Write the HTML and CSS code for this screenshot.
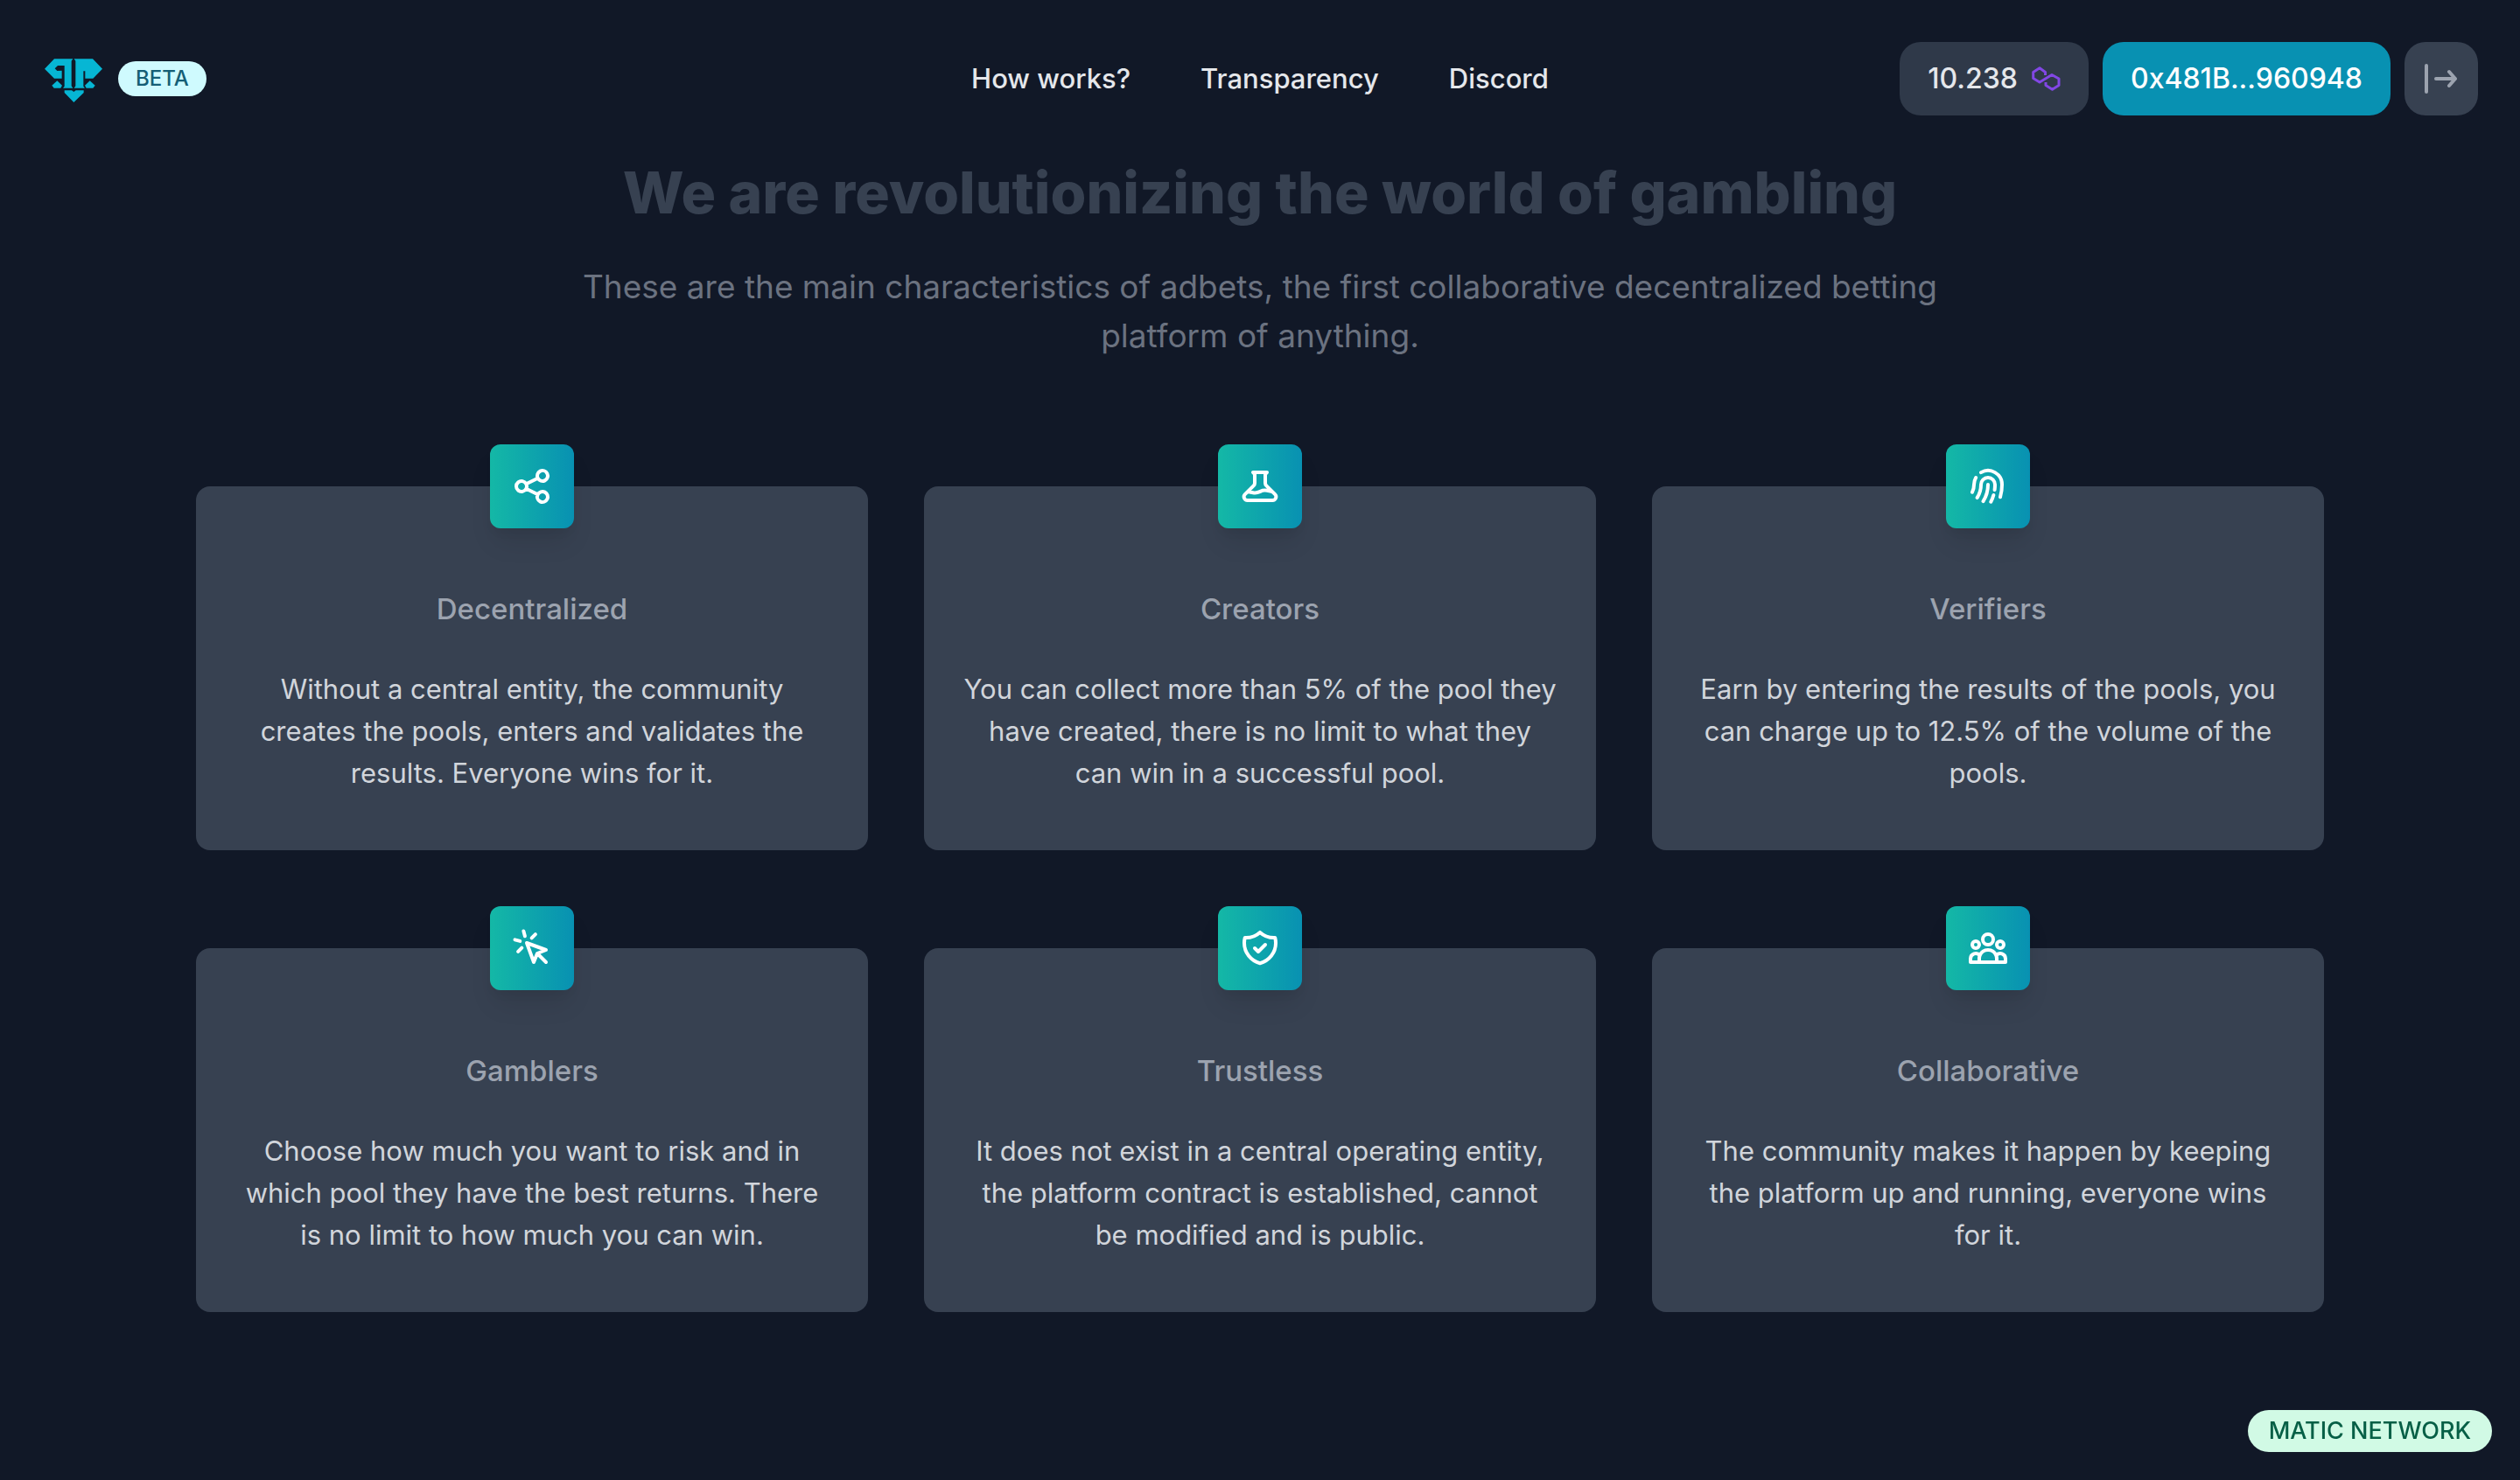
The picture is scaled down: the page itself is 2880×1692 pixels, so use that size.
FILE: index.html
```html
<!DOCTYPE html>
<html lang="en">
<head>
    <meta charset="UTF-8">
    <meta name="viewport" content="width=device-width, initial-scale=1.0">
    <title>adbets</title>
    <link rel="stylesheet" href="styles.css">
</head>
<body>
    <header class="header">
        <div class="brand">
            <a class="home" href="#" aria-label="adbets">
                <svg class="logo" viewBox="63 83 198 150">
                    <path d="M63 118L96 84H160L155 91V177L160 184H126L131 178V107H108L98 117L106 125L122 124V151H96Z"/>
                    <path d="M261 118L228 84H164L169 91V177L164 184H201L196 178V126H219L228 118L218 107H202V151H229Z"/>
                    <path d="M88 175L106 159L123 175L118 184H95Z"/>
                    <path d="M236 175L218 159L201 175L206 184H229Z"/>
                    <path d="M131 192H156L163 197L170 192H197V200L163 233L131 200Z"/>
                </svg>
            </a>
            <span class="beta">BETA</span>
        </div>

        <nav class="nav">
            <a href="#">How works?</a>
            <a href="#">Transparency</a>
            <a href="#">Discord</a>
        </nav>

        <div class="wallet">
            <div class="balance">
                <span>10.238</span>
                <svg class="matic" viewBox="0 0 33 28">
                    <path d="M15.500 10V6.500L9 1.800L1.700 6.500V13.500L9 18L23 9.500L31 14V21.500L23.500 26.200L16 21.500V18"/>
                </svg>
            </div>
            <button class="address">0x481B...960948</button>
            <button class="exit" aria-label="Disconnect">
                <svg class="icon" viewBox="0 0 24 24"><path d="M3.500 4.500v15M9 12h11M16.500 8l3.500 4-3.500 4"/></svg>
            </button>
        </div>
    </header>

    <main class="container">
        <h1>We are revolutionizing the world of gambling</h1>
        <p class="lead">These are the main characteristics of adbets, the first collaborative decentralized betting platform of anything.</p>

        <div class="cards">
            <div class="card">
                <div class="card-icon">
                    <svg class="icon" viewBox="0 0 24 24"><path d="M8.684 13.342C8.886 12.938 9 12.482 9 12c0-.482-.114-.938-.316-1.342m0 2.684a3 3 0 110-2.684m0 2.684l6.632 3.316m-6.632-6l6.632-3.316m0 0a3 3 0 105.367-2.684 3 3 0 00-5.367 2.684zm0 9.316a3 3 0 105.368 2.684 3 3 0 00-5.368-2.684z"/></svg>
                </div>
                <h2>Decentralized</h2>
                <p>Without a central entity, the community creates the pools, enters and validates the results. Everyone wins for it.</p>
            </div>

            <div class="card">
                <div class="card-icon">
                    <svg class="icon" viewBox="0 0 24 24"><path d="M19.428 15.428a2 2 0 00-1.022-.547l-2.387-.477a6 6 0 00-3.86.517l-.318.158a6 6 0 01-3.86.517L6.05 15.21a2 2 0 00-1.806.547M8 4h8l-1 1v5.172a2 2 0 00.586 1.414l5 5c1.26 1.26.367 3.414-1.415 3.414H4.828c-1.782 0-2.674-2.154-1.414-3.414l5-5A2 2 0 009 10.172V5L8 4z"/></svg>
                </div>
                <h2>Creators</h2>
                <p>You can collect more than 5% of the pool they have created, there is no limit to what they can win in a successful pool.</p>
            </div>

            <div class="card">
                <div class="card-icon">
                    <svg class="icon" viewBox="0 0 24 24"><path d="M12 11c0 3.517-1.009 6.799-2.753 9.571m-3.44-2.04l.054-.09A13.916 13.916 0 008 11a4 4 0 118 0c0 1.017-.07 2.019-.203 3m-2.118 6.844A21.88 21.88 0 0015.171 17m3.839 1.132c.645-2.266.99-4.659.99-7.132A8 8 0 008 4.07M3 15.364c.64-1.319 1-2.8 1-4.364 0-1.457.39-2.823 1.07-4"/></svg>
                </div>
                <h2>Verifiers</h2>
                <p>Earn by entering the results of the pools, you can charge up to 12.5% of the volume of the pools.</p>
            </div>

            <div class="card">
                <div class="card-icon">
                    <svg class="icon" viewBox="0 0 24 24"><path d="M15 15l-2 5L9 9l11 4-5 2zm0 0l5 5M7.188 2.239l.777 2.897M5.136 7.965l-2.898-.777M13.95 4.05l-2.122 2.122m-5.657 5.656l-2.12 2.122"/></svg>
                </div>
                <h2>Gamblers</h2>
                <p>Choose how much you want to risk and in which pool they have the best returns. There is no limit to how much you can win.</p>
            </div>

            <div class="card">
                <div class="card-icon">
                    <svg class="icon" viewBox="0 0 24 24"><path d="M9 12l2 2 4-4m5.618-4.016A11.955 11.955 0 0112 2.944a11.955 11.955 0 01-8.618 3.04A12.02 12.02 0 003 9c0 5.591 3.824 10.29 9 11.622 5.176-1.332 9-6.03 9-11.622 0-1.042-.133-2.052-.382-3.016z"/></svg>
                </div>
                <h2>Trustless</h2>
                <p>It does not exist in a central operating entity, the platform contract is established, cannot be modified and is public.</p>
            </div>

            <div class="card">
                <div class="card-icon">
                    <svg class="icon" viewBox="0 0 24 24"><path d="M17 20h5v-2a3 3 0 00-5.356-1.857M17 20H7m10 0v-2c0-.656-.126-1.283-.356-1.857M7 20H2v-2a3 3 0 015.356-1.857M7 20v-2c0-.656.126-1.283.356-1.857m0 0a5.002 5.002 0 019.288 0M15 7a3 3 0 11-6 0 3 3 0 016 0zm6 3a2 2 0 11-4 0 2 2 0 014 0zM7 10a2 2 0 11-4 0 2 2 0 014 0z"/></svg>
                </div>
                <h2>Collaborative</h2>
                <p>The community makes it happen by keeping the platform up and running, everyone wins for it.</p>
            </div>
        </div>
    </main>

    <div class="network">MATIC NETWORK</div>
</body>
</html>
```
FILE: styles.css
```css
* {
    box-sizing: border-box;
}
body {
    margin: 0;
    font-family: Inter, "Liberation Sans", sans-serif;
    font-size: 31px;
    line-height: 48px;
    background-color: #111827;
    color: #e5e7eb;
}
h1, h2, p {
    margin: 0;
}
a {
    color: inherit;
    text-decoration: none;
}
button {
    border: none;
    font: inherit;
    cursor: pointer;
}
.icon {
    width: 48px;
    height: 48px;
    fill: none;
    stroke: currentColor;
    stroke-width: 2;
    stroke-linecap: round;
    stroke-linejoin: round;
}

/* header */
.header {
    display: grid;
    grid-template-columns: 1fr auto 1fr;
    align-items: center;
    padding: 48px;
    font-weight: 500;
}
.brand {
    display: flex;
    align-items: center;
    gap: 18px;
    padding-left: 3px;
}
.home {
    padding-top: 4px;
}
.logo {
    display: block;
    width: 66px;
    height: 50px;
    fill: #06b6d4;
}
.beta {
    padding: 0 20px;
    border-radius: 20px;
    background-color: #cffafe;
    color: #155e75;
    font-size: 24px;
    line-height: 40px;
}
.nav {
    display: flex;
    gap: 80px;
}
.wallet {
    display: flex;
    justify-content: flex-end;
    gap: 16px;
    font-size: 32px;
}
.balance, .address, .exit {
    display: flex;
    align-items: center;
    justify-content: center;
    height: 84px;
    padding: 0 32px;
    border-radius: 24px;
}
.balance {
    gap: 16px;
    background-color: #2f3949;
}
.matic {
    width: 33px;
    height: 28px;
    fill: none;
    stroke: #8247e5;
    stroke-width: 3;
    stroke-linejoin: round;
}
.address {
    background-color: #0891b2;
    color: #fff;
}
.exit {
    width: 84px;
    padding: 0;
    background-color: #374151;
    color: #9ca3af;
}

/* features */
.container {
    max-width: 2560px;
    margin: auto;
    padding: 0 64px 96px;
    text-align: center;
}
h1 {
    font-size: 66px;
    line-height: 80px;
    font-weight: 800;
    color: #374151;
}
.lead {
    max-width: 1620px;
    margin: 40px auto 0;
    font-size: 37px;
    line-height: 56px;
    color: #6b7280;
}
.cards {
    display: grid;
    grid-template-columns: repeat(3, 1fr);
    gap: 112px 64px;
    margin-top: 144px;
}
.card {
    padding: 0 44px 64px;
    border-radius: 16px;
    background-color: #374151;
    color: #d1d5db;
}
.card-icon {
    display: flex;
    align-items: center;
    justify-content: center;
    width: 96px;
    height: 96px;
    margin: -48px auto 0;
    border-radius: 12px;
    background: linear-gradient(to right, #14b8a6, #0891b2);
    box-shadow: 0 20px 30px -6px rgba(0, 0, 0, 0.1), 0 8px 12px -4px rgba(0, 0, 0, 0.05);
    color: #fff;
}
.card h2 {
    margin: 64px 0 40px;
    font-size: 33px;
    line-height: 56px;
    font-weight: 500;
    color: #9ca3af;
}

/* network badge */
.network {
    position: fixed;
    right: 32px;
    bottom: 32px;
    padding: 0 24px;
    border-radius: 24px;
    background-color: #d1fae5;
    color: #065f46;
    font-size: 27px;
    font-weight: 500;
}
```
